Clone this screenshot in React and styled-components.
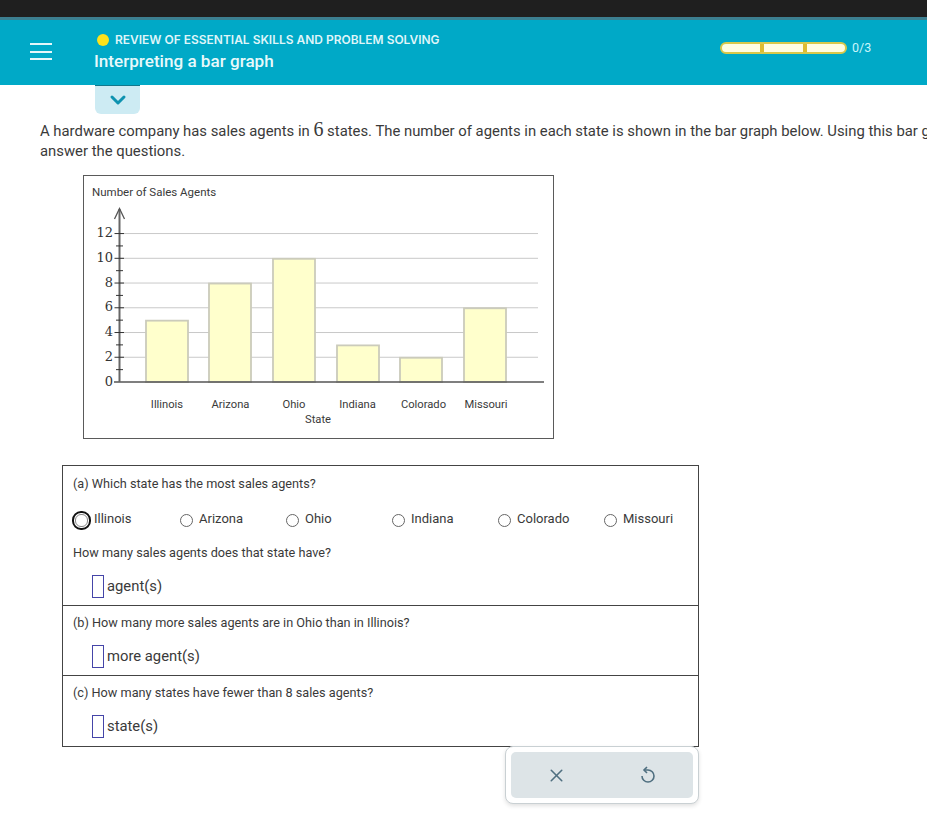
import React from 'react';
import styled, { createGlobalStyle } from 'styled-components';
import { X, ChevronDown } from 'lucide-react';

const GlobalStyle = createGlobalStyle`
  html, body {
    margin: 0;
    padding: 0;
    background: #fff;
    overflow: hidden;
  }
  body {
    font-family: Roboto, "Liberation Sans", sans-serif;
    color: #2b2b2b;
  }
`;

const Page = styled.div`
  width: 927px;
  height: 814px;
  overflow: hidden;
  display: flex;
  flex-direction: column;
`;

const TopBar = styled.div`
  height: 17px;
  background: #1f1f1f;
  border-bottom: 3px solid #3c7f90;
`;

const Header = styled.header`
  height: 65px;
  background: #00a9c7;
  display: flex;
  align-items: flex-start;
  color: #fff;
`;

const Menu = styled.button`
  width: 22px;
  height: 17px;
  margin: 23px 0 0 30px;
  padding: 0;
  border: 0;
  background: none;
  display: flex;
  flex-direction: column;
  justify-content: space-between;
  span {
    display: block;
    height: 2px;
    background: #e4f7fa;
  }
`;

const Titles = styled.div`
  margin: 13px 0 0 42px;
  width: 626px;
  display: flex;
  flex-direction: column;
  gap: 4px;
`;

const Topic = styled.div`
  display: flex;
  align-items: center;
  padding-left: 3px;
  font-family: Inter, sans-serif;
  font-weight: 600;
  font-size: 11.97px;
  line-height: 14px;
  color: #dff5f9;
  i {
    width: 12px;
    height: 12px;
    border-radius: 50%;
    background: #fde21b;
    margin-right: 6px;
  }
`;

const Title = styled.div`
  font-weight: 500;
  font-size: 17.1px;
  line-height: 20px;
  color: #e8f9fb;
`;

const Progress = styled.div`
  width: 127px;
  height: 12px;
  margin-top: 22px;
  box-sizing: border-box;
  border: 2px solid #d8c84a;
  border-radius: 6px;
  background: #fffde2;
  display: flex;
  justify-content: space-evenly;
  span {
    width: 4px;
    background: #dcbc32;
  }
`;

const Count = styled.div`
  margin: 20px 0 0 5px;
  font-size: 12.5px;
  line-height: 15px;
  color: #c9f6fb;
`;

const Drawer = styled.button`
  width: 45px;
  height: 29px;
  margin-left: 95px;
  padding: 0;
  border: 0;
  border-top: 1px solid #12788c;
  border-radius: 0 0 6px 6px;
  background: #cdebf3;
  color: #0e93b0;
  display: flex;
  align-items: center;
  justify-content: center;
`;

const Prompt = styled.p`
  margin: 5px 0 0 40px;
  width: 950px;
  font-size: 14.85px;
  line-height: 20px;
  color: #3a3a3a;
  b {
    font-family: "Liberation Serif", serif;
    font-weight: 400;
    font-size: 20px;
  }
`;

const ChartBox = styled.div`
  width: 471px;
  height: 264px;
  box-sizing: border-box;
  margin: 14px 0 0 83px;
  border: 1.5px solid #5a5a5a;
`;

const QuestionTable = styled.div`
  width: 637px;
  box-sizing: border-box;
  margin: 26px 0 0 62px;
  border: 1px solid #444;
`;

const Section = styled.section`
  height: ${(p) => p.$h}px;
  box-sizing: border-box;
  padding: ${(p) => p.$pad}px 0 0 10px;
  border-bottom: ${(p) => (p.$last ? 0 : '1px solid #444')};
`;

const Question = styled.div`
  font-size: 12.7px;
  line-height: 16px;
  color: #3a3a3a;
`;

const Options = styled.div`
  display: grid;
  grid-template-columns: repeat(6, 106px);
  margin: 18px 0 17px;
  height: 18px;
  align-items: center;
`;

const Option = styled.label`
  display: flex;
  align-items: center;
  font-size: 13px;
  line-height: 16px;
  color: #3a3a3a;
`;

const Radio = styled.span`
  width: 13px;
  height: 13px;
  border: 1px solid #666;
  border-radius: 50%;
  box-sizing: border-box;
  flex: none;
  margin: 2px 6px 0 ${(p) => (p.$first ? '2px' : '1px')};
  ${(p) => p.$first && `
    outline: 2px solid #111;
    outline-offset: 1px;
    border-radius: 6px;
    border-color: #888;
  `}
`;

const Answer = styled.div`
  display: flex;
  align-items: center;
  margin: 14px 0 0 19px;
  font-size: 14.8px;
  line-height: 23px;
  color: #3a3a3a;
`;

const Blank = styled.span`
  width: 12px;
  height: 23px;
  box-sizing: border-box;
  border: 1.5px solid #4545a8;
  margin-right: 3px;
`;

const ToolRow = styled.div`
  width: 637px;
  margin: -1px 0 0 62px;
  display: flex;
  justify-content: flex-end;
`;

const Tools = styled.div`
  width: 194px;
  height: 58px;
  box-sizing: border-box;
  padding: 5px;
  border: 1px solid #c9d0d3;
  border-radius: 8px;
  background: #fff;
  box-shadow: 0 2px 4px rgba(0, 0, 0, 0.12);
`;

const ToolInner = styled.div`
  height: 46px;
  border-radius: 5px;
  background: #dde4e7;
  display: grid;
  grid-template-columns: 1fr 1fr;
  button {
    border: 0;
    padding: 0;
    background: none;
    color: #4f6f80;
    display: flex;
    align-items: center;
    justify-content: center;
  }
`;

const AxisNum = styled.text`
  font-family: "DejaVu Serif", serif;
  font-size: 13px;
  fill: #333;
  text-anchor: end;
`;

const ChartLabel = styled.text`
  font-family: Roboto, sans-serif;
  font-size: ${(p) => p.$size || 11}px;
  fill: #3a3a3a;
  text-anchor: ${(p) => p.$anchor || 'middle'};
`;

const bars = [
  { name: 'Illinois', x: 62, v: 5, lx: 83 },
  { name: 'Arizona', x: 125, v: 8, lx: 146.5 },
  { name: 'Ohio', x: 189, v: 10, lx: 210 },
  { name: 'Indiana', x: 253, v: 3, lx: 273.5 },
  { name: 'Colorado', x: 316, v: 2, lx: 339.5 },
  { name: 'Missouri', x: 380, v: 6, lx: 402 },
];

const states = ['Illinois', 'Arizona', 'Ohio', 'Indiana', 'Colorado', 'Missouri'];

// chart coordinates are relative to the box, 0 sits at y=206
const yOf = (v) => 206 - v * 12.37;

function BarChart() {
  return (
    <svg width="468" height="261" viewBox="0 0 468 261" style={{ display: 'block' }}>
      <ChartLabel x="8" y="20" $anchor="start" $size={11.5}>Number of Sales Agents</ChartLabel>
      {[2, 4, 6, 8, 10, 12].map((v) => (
        <line key={v} x1="36" x2="454" y1={yOf(v)} y2={yOf(v)} stroke="#c9c9c9" strokeWidth="1" />
      ))}
      {bars.map((b) => (
        <rect
          key={b.name}
          x={b.x}
          y={yOf(b.v) + 0.5}
          width="42"
          height={206 - yOf(b.v) - 0.5}
          fill="#ffffcc"
          stroke="#cbcbbb"
          strokeWidth="1.8"
        />
      ))}
      <line x1="30" x2="460" y1="206" y2="206" stroke="#555" strokeWidth="1.5" />
      <line x1="35.5" x2="35.5" y1="33" y2="206" stroke="#666" strokeWidth="2" />
      <path d="M30.5 43 L35.5 32.5 L40.5 43" fill="none" stroke="#555" strokeWidth="1.3" />
      {[1, 2, 3, 4, 5, 6, 7, 8, 9, 10, 11, 12].map((v) => (
        <line
          key={v}
          x1={v % 2 ? 32 : 30.5}
          x2={v % 2 ? 39 : 40}
          y1={yOf(v)}
          y2={yOf(v)}
          stroke="#333"
          strokeWidth="1"
        />
      ))}
      {[0, 2, 4, 6, 8, 10, 12].map((v) => (
        <AxisNum key={v} x="29" y={yOf(v) + 3.5}>{v}</AxisNum>
      ))}
      {bars.map((b) => (
        <ChartLabel key={b.name} x={b.lx} y="232" $size={11.2}>{b.name}</ChartLabel>
      ))}
      <ChartLabel x="234" y="247" $size={11.2}>State</ChartLabel>
    </svg>
  );
}

function UndoIcon() {
  return (
    <svg width="18" height="18" viewBox="0 0 18 18" fill="none" stroke="currentColor" strokeWidth="1.6">
      <path d="M8 1 L5 4 L8 7" />
      <path d="M5 4 H9 A6 6 0 1 1 3 10" />
    </svg>
  );
}

export default function App() {
  return (
    <Page>
      <GlobalStyle />
      <TopBar />
      <Header>
        <Menu aria-label="menu">
          <span />
          <span />
          <span />
        </Menu>
        <Titles>
          <Topic>
            <i />
            REVIEW OF ESSENTIAL SKILLS AND PROBLEM SOLVING
          </Topic>
          <Title>Interpreting a bar graph</Title>
        </Titles>
        <Progress>
          <span />
          <span />
        </Progress>
        <Count>0/3</Count>
      </Header>
      <Drawer aria-label="expand">
        <ChevronDown size={24} strokeWidth={3} />
      </Drawer>
      <Prompt>
        A hardware company has sales agents in <b>6</b> states. The number of agents in each state is shown in the bar graph below. Using this bar graph,
        <br />
        answer the questions.
      </Prompt>
      <ChartBox>
        <BarChart />
      </ChartBox>
      <QuestionTable>
        <Section $h={140} $pad={10}>
          <Question>(a) Which state has the most sales agents?</Question>
          <Options>
            {states.map((s, i) => (
              <Option key={s}>
                <Radio $first={i === 0} />
                {s}
              </Option>
            ))}
          </Options>
          <Question>How many sales agents does that state have?</Question>
          <Answer>
            <Blank />
            agent(s)
          </Answer>
        </Section>
        <Section $h={70} $pad={9}>
          <Question>(b) How many more sales agents are in Ohio than in Illinois?</Question>
          <Answer>
            <Blank />
            more agent(s)
          </Answer>
        </Section>
        <Section $h={70} $pad={9} $last>
          <Question>(c) How many states have fewer than 8 sales agents?</Question>
          <Answer>
            <Blank />
            state(s)
          </Answer>
        </Section>
      </QuestionTable>
      <ToolRow>
        <Tools>
          <ToolInner>
            <button aria-label="clear">
              <X size={21} strokeWidth={1.8} />
            </button>
            <button aria-label="undo">
              <UndoIcon />
            </button>
          </ToolInner>
        </Tools>
      </ToolRow>
    </Page>
  );
}
